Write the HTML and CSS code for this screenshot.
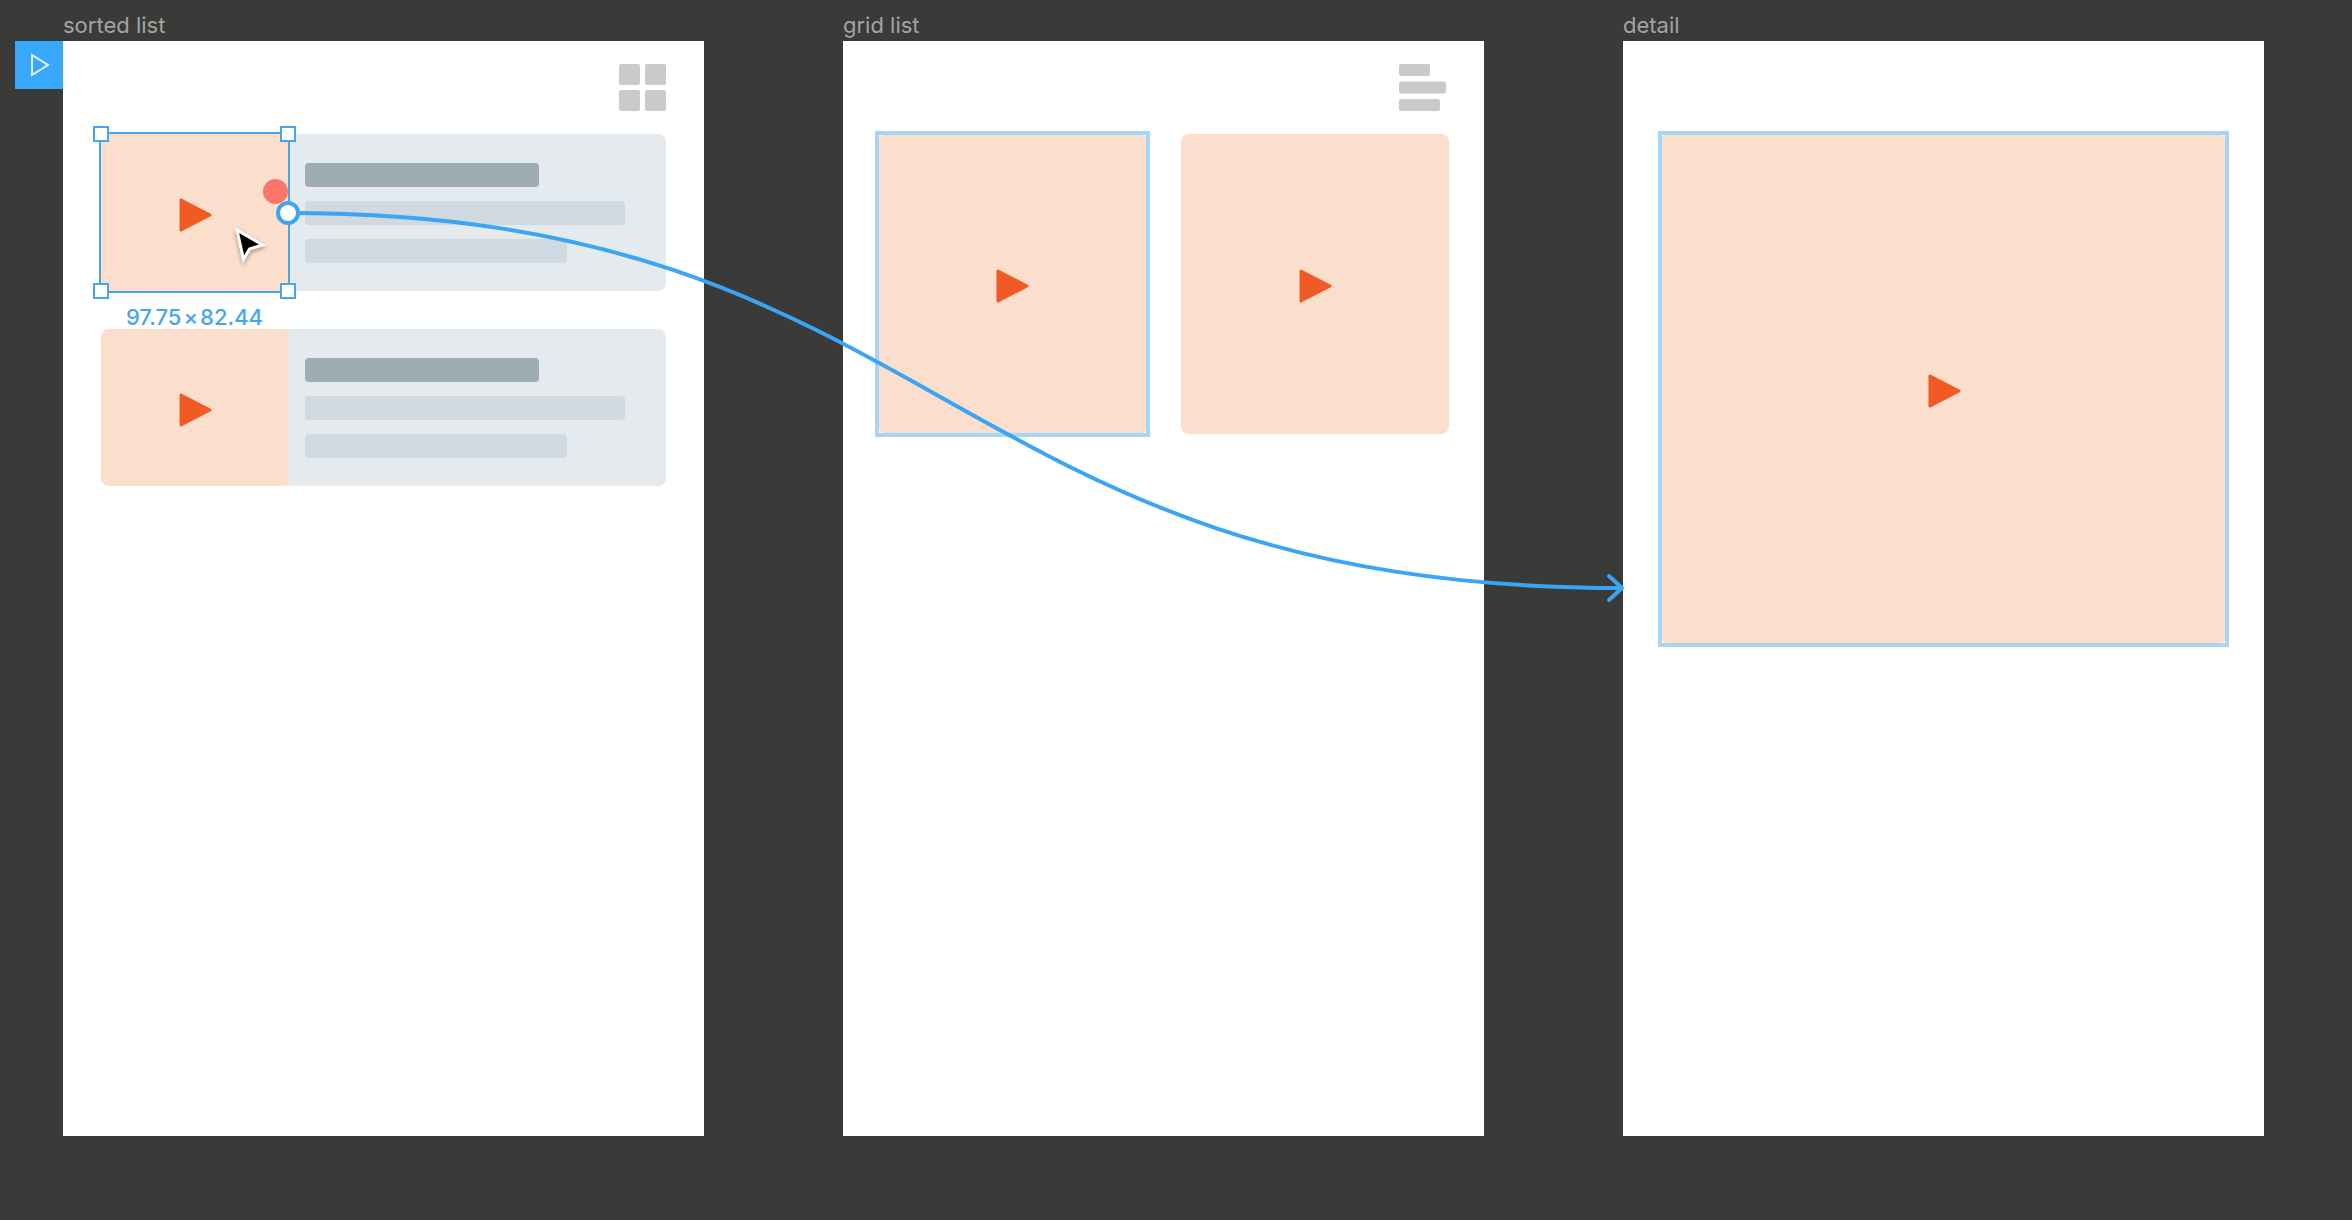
FILE: index.html
```html
<!DOCTYPE html>
<html lang="en">
<head>
  <meta charset="UTF-8">
  <meta name="viewport" content="width=device-width, initial-scale=1.0">
  <title>Prototype</title>
  <link rel="stylesheet" href="styles.css">
</head>
<body>

  <!-- shared shapes -->
  <svg class="defs" aria-hidden="true">
    <symbol id="play" viewBox="0 0 36 38">
      <path d="M4 6 L33 21 L4 36 Z" fill="#f15a24" stroke="#f15a24" stroke-width="3" stroke-linejoin="round"/>
    </symbol>
  </svg>

  <main class="canvas">

    <section class="frame">
      <h2 class="frame-name">sorted list</h2>
      <button class="start" type="button" aria-label="Start prototype">
        <svg width="24" height="28" viewBox="0 0 24 28"><path d="M5 4 V24 L21 14 Z" fill="none" stroke="#e6f4ff" stroke-width="2"/></svg>
      </button>
      <div class="screen">
        <header class="toolbar">
          <button class="view-btn" type="button" aria-label="Grid view">
            <svg width="47" height="47" viewBox="0 0 47 47" fill="#cacaca">
              <rect width="21" height="21" rx="2"/>
              <rect x="26" width="21" height="21" rx="2"/>
              <rect y="26" width="21" height="21" rx="2"/>
              <rect x="26" y="26" width="21" height="21" rx="2"/>
            </svg>
          </button>
        </header>
        <div class="list">
          <article class="item">
            <div class="thumb">
              <svg class="play"><use href="#play"/></svg>
              <span class="tap"></span>
              <span class="selection">
                <i class="handle tl"></i>
                <i class="handle tr"></i>
                <i class="handle bl"></i>
                <i class="handle br"></i>
              </span>
              <span class="size">97.75<span class="times">×</span>82.44</span>
            </div>
            <div class="lines">
              <span class="line title"></span>
              <span class="line"></span>
              <span class="line short"></span>
            </div>
          </article>
          <article class="item">
            <div class="thumb">
              <svg class="play"><use href="#play"/></svg>
            </div>
            <div class="lines">
              <span class="line title"></span>
              <span class="line"></span>
              <span class="line short"></span>
            </div>
          </article>
        </div>
      </div>
    </section>

    <section class="frame">
      <h2 class="frame-name">grid list</h2>
      <div class="screen">
        <header class="toolbar">
          <button class="view-btn" type="button" aria-label="List view">
            <svg width="47" height="47" viewBox="0 0 47 47" fill="#cacaca">
              <rect width="31" height="12" rx="2"/>
              <rect y="17.500" width="47" height="12" rx="2"/>
              <rect y="35" width="41" height="12" rx="2"/>
            </svg>
          </button>
        </header>
        <div class="grid">
          <div class="tile linked"><svg class="play"><use href="#play"/></svg></div>
          <div class="tile"><svg class="play"><use href="#play"/></svg></div>
        </div>
      </div>
    </section>

    <section class="frame">
      <h2 class="frame-name">detail</h2>
      <div class="screen">
        <header class="toolbar"></header>
        <div class="hero linked"><svg class="play"><use href="#play"/></svg></div>
      </div>
    </section>

    <!-- prototype link from the thumbnail to the detail frame -->
    <svg class="connector" width="2352" height="1220" viewBox="0 0 2352 1220" aria-hidden="true">
      <g fill="none" stroke="#3aa5f4" stroke-width="4">
        <path d="M288 213 C944 213 944 588 1622 588"/>
        <path d="M1609 576 L1622 588 L1609 600" stroke-linecap="round" stroke-linejoin="round"/>
        <circle cx="288" cy="213" r="10" fill="#fff"/>
      </g>
      <path class="pointer" d="M237 230 L262.500 245 L249.500 249 L243.500 259.500 Z" fill="#000" stroke="#fff" stroke-width="3"/>
    </svg>

  </main>

</body>
</html>
```

FILE: styles.css
```css
* {
  margin: 0;
  box-sizing: border-box;
}

body {
  font-family: Inter, "Liberation Sans", sans-serif;
  background: #3a3a39;
}

button {
  padding: 0;
  border: none;
  background: none;
  cursor: pointer;
}

svg {
  display: block;
}

.defs {
  position: absolute;
  width: 0;
  height: 0;
}

.canvas {
  position: relative;
  display: flex;
  gap: 139px;
  height: 100vh;
  padding: 8px 88px 84px 63px;
  overflow: hidden;
}

.frame {
  position: relative;
  flex: 1;
  display: flex;
  flex-direction: column;
}

.frame-name {
  height: 33px;
  font-size: 22px;
  line-height: 34px;
  font-weight: 400;
  color: #a3a3a3;
}

.start {
  position: absolute;
  top: 33px;
  right: 100%;
  display: flex;
  align-items: center;
  justify-content: center;
  width: 48px;
  height: 48px;
  background: #38a8fc;
}

.screen {
  flex: 1;
  padding: 23px 38px;
  background: #fff;
}

.toolbar {
  display: flex;
  justify-content: flex-end;
  height: 70px;
}

.view-btn {
  width: 47px;
  height: 47px;
}

.thumb,
.tile,
.hero {
  position: relative;
  display: flex;
  align-items: center;
  justify-content: center;
  border-radius: 8px;
  background: #fcdecc;
}

.play {
  width: 36px;
  height: 38px;
}

/* sorted list */

.list {
  display: flex;
  flex-direction: column;
  gap: 38px;
}

.item {
  display: flex;
  height: 157px;
  border-radius: 8px;
  background: #e5eaee;
}

.thumb {
  width: 187px;
}

.lines {
  flex: 1;
  display: flex;
  flex-direction: column;
  justify-content: center;
  gap: 14px;
  padding: 0 41px 0 17px;
}

.line {
  height: 24px;
  border-radius: 4px;
  background: #ced9e1;
}

.line.title {
  width: 73%;
  background: #9eacb3;
}

.line.short {
  width: 82%;
}

.tap {
  position: absolute;
  top: 45px;
  right: 0;
  width: 25px;
  height: 25px;
  border-radius: 50%;
  background: #fa756b;
}

.selection {
  position: absolute;
  inset: -2px;
  border: 2px solid #46a5ee;
}

.handle {
  position: absolute;
  width: 16px;
  height: 16px;
  border: 2px solid #46a5ee;
  background: #fff;
}

.tl { top: -8px; left: -8px; }
.tr { top: -8px; right: -8px; }
.bl { bottom: -8px; left: -8px; }
.br { bottom: -8px; right: -8px; }

.size {
  position: absolute;
  top: 100%;
  left: 0;
  right: 0;
  margin-top: 10px;
  font-size: 22px;
  line-height: 32px;
  font-weight: 500;
  font-feature-settings: "calt" 0;
  text-align: center;
  color: #46a5ee;
}

.times {
  margin: 0 2px;
}

/* grid list */

.grid {
  display: grid;
  grid-template-columns: 1fr 1fr;
  gap: 34px;
  margin: 0 -3px;
}

.tile {
  height: 300px;
}

/* detail */

.hero {
  height: 510px;
}

/* square highlight over the rounded card */
.linked::after {
  content: "";
  position: absolute;
  inset: -3px;
  border: 4px solid #a6d6f7;
}

/* overlay */

.connector {
  position: absolute;
  top: 0;
  left: 0;
  pointer-events: none;
}

.pointer {
  filter: drop-shadow(0 2px 2px rgba(0, 0, 0, 0.35));
}
```
